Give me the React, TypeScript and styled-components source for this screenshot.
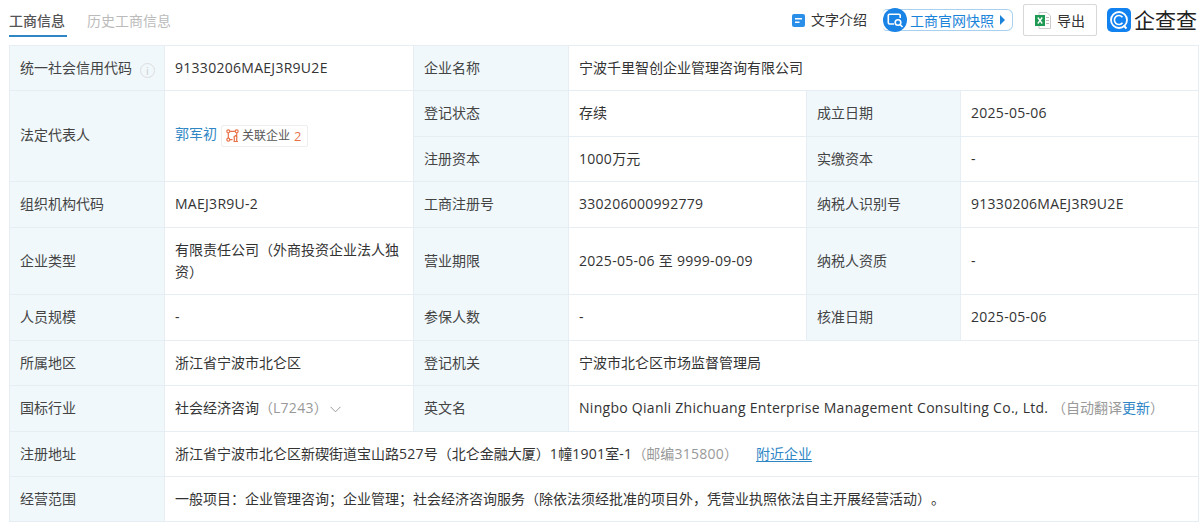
import React from "react";
import styled, { createGlobalStyle } from "styled-components";

const Global = createGlobalStyle`
  html, body { margin: 0; padding: 0; background: #fff; }
  body { font-family: "Open Sans", "Noto Sans CJK SC", sans-serif; font-size: 14px; color: #333; text-spacing-trim: space-all; }
`;
const Page = styled.div`
  width: 1203px; height: 531px; box-sizing: border-box; padding: 0 5px 0 9px; overflow: hidden;
`;
const Header = styled.div`
  height: 45px; display: flex; align-items: flex-start; justify-content: space-between;
`;
const Tabs = styled.div`display: flex; gap: 20px;`;
const Tab = styled.div<{ $active?: boolean }>`
  height: 37px; box-sizing: border-box; padding: 11px 2px 0 0; line-height: 20px; font-size: 14px;
  color: ${p => (p.$active ? "#555" : "#bbb")};
  font-weight: ${p => (p.$active ? 500 : 400)};
  border-bottom: ${p => (p.$active ? "2px solid #2f86c5" : "none")};
`;
const Tools = styled.div`display: flex; align-items: center; height: 40px;`;
const TextIntro = styled.div`
  display: flex; align-items: center; gap: 6px; font-size: 14px; line-height: 20px; color: #333; margin-right: 16px;
`;
const Pill = styled.div`
  display: flex; align-items: center; height: 22px; margin-right: 10px; position: relative;
  box-sizing: border-box; width: 130px; padding-left: 27px; color: #1a83d9; font-size: 14px;
  border: 1px solid #a9d0ee; border-radius: 4px 6px 6px 4px; border-left: none;
`;
const PillCircle = styled.span`
  position: absolute; left: 0; top: -2px; width: 24px; height: 24px; border-radius: 50%;
  background: #1a83e6; display: flex; align-items: center; justify-content: center;
`;
const PillArrow = styled.span`
  position: absolute; right: 7px; top: 5px; width: 0; height: 0;
  border-left: 5px solid #1a83d9; border-top: 5px solid transparent; border-bottom: 5px solid transparent;
`;
const ExportBtn = styled.div`
  width: 74px; height: 32px; box-sizing: border-box; border: 1px solid #d8d8d8; border-radius: 2px;
  display: flex; align-items: center; justify-content: center; gap: 6px; margin-right: 10px; font-size: 14px; color: #333;
`;
const Logo = styled.div`display: flex; align-items: center; gap: 3px;`;
const LogoText = styled.span`
  font-size: 21px; line-height: 24px; color: #222; font-weight: 400; white-space: nowrap; width: 64px;
`;
const Table = styled.table`
  border-collapse: collapse; table-layout: fixed; width: 1189px; font-size: 14px; line-height: 22px;
`;
const Row = styled.tr<{ $h: number }>`
  height: ${p => p.$h}px;
  & > td { padding-bottom: ${p => (p.$h === 46 ? 2 : 0)}px; }
`;
const Label = styled.td`
  border: 1px solid #e6eef4; background: #f0f8fc; padding: 0 0 0 10px; color: #444; vertical-align: middle; white-space: nowrap;
`;
const Value = styled.td`
  border: 1px solid #e6eef4; padding: 0 10px; color: #333; vertical-align: middle;
`;
const Latin = styled.span`letter-spacing: 0.28px;`;
const Hint = styled.span`color: #999;`;
const LinkText = styled.a<{ $underline?: boolean }>`
  color: #2f86c5; text-decoration: ${p => (p.$underline ? "underline" : "none")}; text-underline-offset: 2px;
  margin-left: ${p => (p.$underline ? 18 : 0)}px;
`;
const Tag = styled.span`
  display: inline-flex; align-items: center; gap: 3px; height: 22px; box-sizing: border-box; margin-left: 4px;
  padding: 0 6px 0 4px; border: 1px solid #eee; border-radius: 2px; font-size: 12px; color: #555;
  vertical-align: middle;
`;
const TagNum = styled.span`color: #e8734a; font-size: 13px; margin-left: 1px;`;
const InfoIcon = styled.span`
  display: inline-flex; align-items: center; justify-content: center; width: 15px; height: 15px; margin-left: 8px;
  border: 1.5px solid #ddd; border-radius: 50%; box-sizing: border-box; color: #ccc; font-size: 11px; line-height: 1;
  vertical-align: -2px;
`;
const Chevron = styled.svg`margin-left: 2px; vertical-align: 0;`;
const Address = styled.span`display: inline-block;`;

const DocIcon = () => (
  <svg width="13" height="13" viewBox="0 0 13 13">
    <rect width="13" height="13" rx="2" fill="#2a8fe8" />
    <rect x="3" y="4" width="7" height="1.5" fill="#fff" />
    <rect x="3" y="7.5" width="4.5" height="1.5" fill="#fff" />
  </svg>
);
const SearchScreen = () => (
  <svg width="17" height="15" viewBox="0 0 17 15" fill="none" stroke="#fff" strokeWidth="1.6">
    <path d="M7 11H2.5A1.2 1.2 0 0 1 1.3 9.800V2.500A1.200 1.200 0 0 1 2.500 1.300H12A1.200 1.200 0 0 1 13.200 2.500V5" />
    <circle cx="11" cy="9.500" r="2.800" />
    <path d="M13 11.500l2.500 2.500" />
  </svg>
);
const ExcelIcon = () => (
  <svg width="16" height="17" viewBox="0 0 16 17">
    <path d="M4 .5h8l3.500 3.500v12.500H4z" fill="#fff" stroke="#ccc" />
    <rect x="11" y="5" width="3" height="1" fill="#bbb" />
    <rect x="11" y="8" width="3" height="1" fill="#bbb" />
    <rect x="11" y="11" width="3" height="1" fill="#bbb" />
    <rect x="0" y="3" width="10" height="11" fill="#1f9a55" />
    <path d="M2.800 5.500l4.400 6M7.200 5.500l-4.400 6" stroke="#fff" strokeWidth="1.300" />
  </svg>
);
const QccLogo = () => (
  <svg width="24" height="24" viewBox="0 0 24 24" fill="none">
    <rect width="24" height="24" rx="5" fill="#1282f0" />
    <circle cx="12" cy="12" r="8" stroke="#fff" strokeWidth="1.800" />
    <path d="M15.500 9.300A4.500 4.500 0 1 0 15.500 14.700" stroke="#fff" strokeWidth="1.600" />
    <path d="M16.500 17.500l3 3" stroke="#fff" strokeWidth="2" />
  </svg>
);
const RelIcon = () => (
  <svg width="13" height="13" viewBox="0 0 13 13" fill="none" stroke="#e8734a" strokeWidth="1.200">
    <circle cx="2.300" cy="2.300" r="1.500" />
    <circle cx="10.700" cy="2.300" r="1.500" />
    <circle cx="2.300" cy="10.700" r="1.500" />
    <path d="M4 2.300h5M2.300 4v5M4 10.700h2.500M10.700 4v3M7.500 8.500L9.500 6.500l2 2M8.300 8.500v4M10.700 8.500v4M7.500 12.500h4.500" />
  </svg>
);

export default function App() {
  return (
    <Page>
      <Global />
      <Header>
        <Tabs>
          <Tab $active>工商信息</Tab>
          <Tab>历史工商信息</Tab>
        </Tabs>
        <Tools>
          <TextIntro><DocIcon />文字介绍</TextIntro>
          <Pill>
            <PillCircle><SearchScreen /></PillCircle>
            工商官网快照
            <PillArrow />
          </Pill>
          <ExportBtn><ExcelIcon />导出</ExportBtn>
          <Logo><QccLogo /><LogoText>企查查</LogoText></Logo>
        </Tools>
      </Header>
      <Table>
        <colgroup>
          <col width={155} /><col width={249} /><col width={155} /><col width={238} /><col width={154} /><col width={238} />
        </colgroup>
        <tbody>
          <Row $h={45}>
            <Label>统一社会信用代码<InfoIcon>i</InfoIcon></Label>
            <Value><Latin>91330206MAEJ3R9U2E</Latin></Value>
            <Label>企业名称</Label>
            <Value colSpan={3}>宁波千里智创企业管理咨询有限公司</Value>
          </Row>
          <Row $h={46}>
            <Label rowSpan={2}>法定代表人</Label>
            <Value rowSpan={2}>
              <LinkText>郭军初</LinkText>
              <Tag><RelIcon />关联企业<TagNum>2</TagNum></Tag>
            </Value>
            <Label>登记状态</Label>
            <Value>存续</Value>
            <Label>成立日期</Label>
            <Value><Latin>2025-05-06</Latin></Value>
          </Row>
          <Row $h={45}>
            <Label>注册资本</Label>
            <Value><Latin>1000</Latin>万元</Value>
            <Label>实缴资本</Label>
            <Value>-</Value>
          </Row>
          <Row $h={46}>
            <Label>组织机构代码</Label>
            <Value><Latin>MAEJ3R9U-2</Latin></Value>
            <Label>工商注册号</Label>
            <Value><Latin>330206000992779</Latin></Value>
            <Label>纳税人识别号</Label>
            <Value><Latin>91330206MAEJ3R9U2E</Latin></Value>
          </Row>
          <Row $h={67}>
            <Label>企业类型</Label>
            <Value>有限责任公司（外商投资企业法人独资）</Value>
            <Label>营业期限</Label>
            <Value><Latin>2025-05-06 至 9999-09-09</Latin></Value>
            <Label>纳税人资质</Label>
            <Value>-</Value>
          </Row>
          <Row $h={46}>
            <Label>人员规模</Label>
            <Value>-</Value>
            <Label>参保人数</Label>
            <Value>-</Value>
            <Label>核准日期</Label>
            <Value><Latin>2025-05-06</Latin></Value>
          </Row>
          <Row $h={45}>
            <Label>所属地区</Label>
            <Value>浙江省宁波市北仑区</Value>
            <Label>登记机关</Label>
            <Value colSpan={3}>宁波市北仑区市场监督管理局</Value>
          </Row>
          <Row $h={46}>
            <Label>国标行业</Label>
            <Value>
              社会经济咨询<Hint>（<Latin>L7243</Latin>）</Hint>
              <Chevron width="11" height="7" viewBox="0 0 11 7" fill="none" stroke="#999"><path d="M.5 .8l5 5 5-5" /></Chevron>
            </Value>
            <Label>英文名</Label>
            <Value colSpan={3}>
              <Latin>Ningbo Qianli Zhichuang Enterprise Management Consulting Co., Ltd.</Latin> <Hint>（自动翻译<LinkText>更新</LinkText>）</Hint>
            </Value>
          </Row>
          <Row $h={45}>
            <Label>注册地址</Label>
            <Value colSpan={5}>
              <Address>浙江省宁波市北仑区新碶街道宝山路<Latin>527</Latin>号（北仑金融大厦）<Latin>1</Latin>幢<Latin>1901</Latin>室<Latin>-1</Latin></Address>
              <Hint>（邮编<Latin>315800</Latin>）</Hint>
              <LinkText $underline>附近企业</LinkText>
            </Value>
          </Row>
          <Row $h={45}>
            <Label>经营范围</Label>
            <Value colSpan={5}>一般项目：企业管理咨询；企业管理；社会经济咨询服务（除依法须经批准的项目外，凭营业执照依法自主开展经营活动）。</Value>
          </Row>
        </tbody>
      </Table>
    </Page>
  );
}
